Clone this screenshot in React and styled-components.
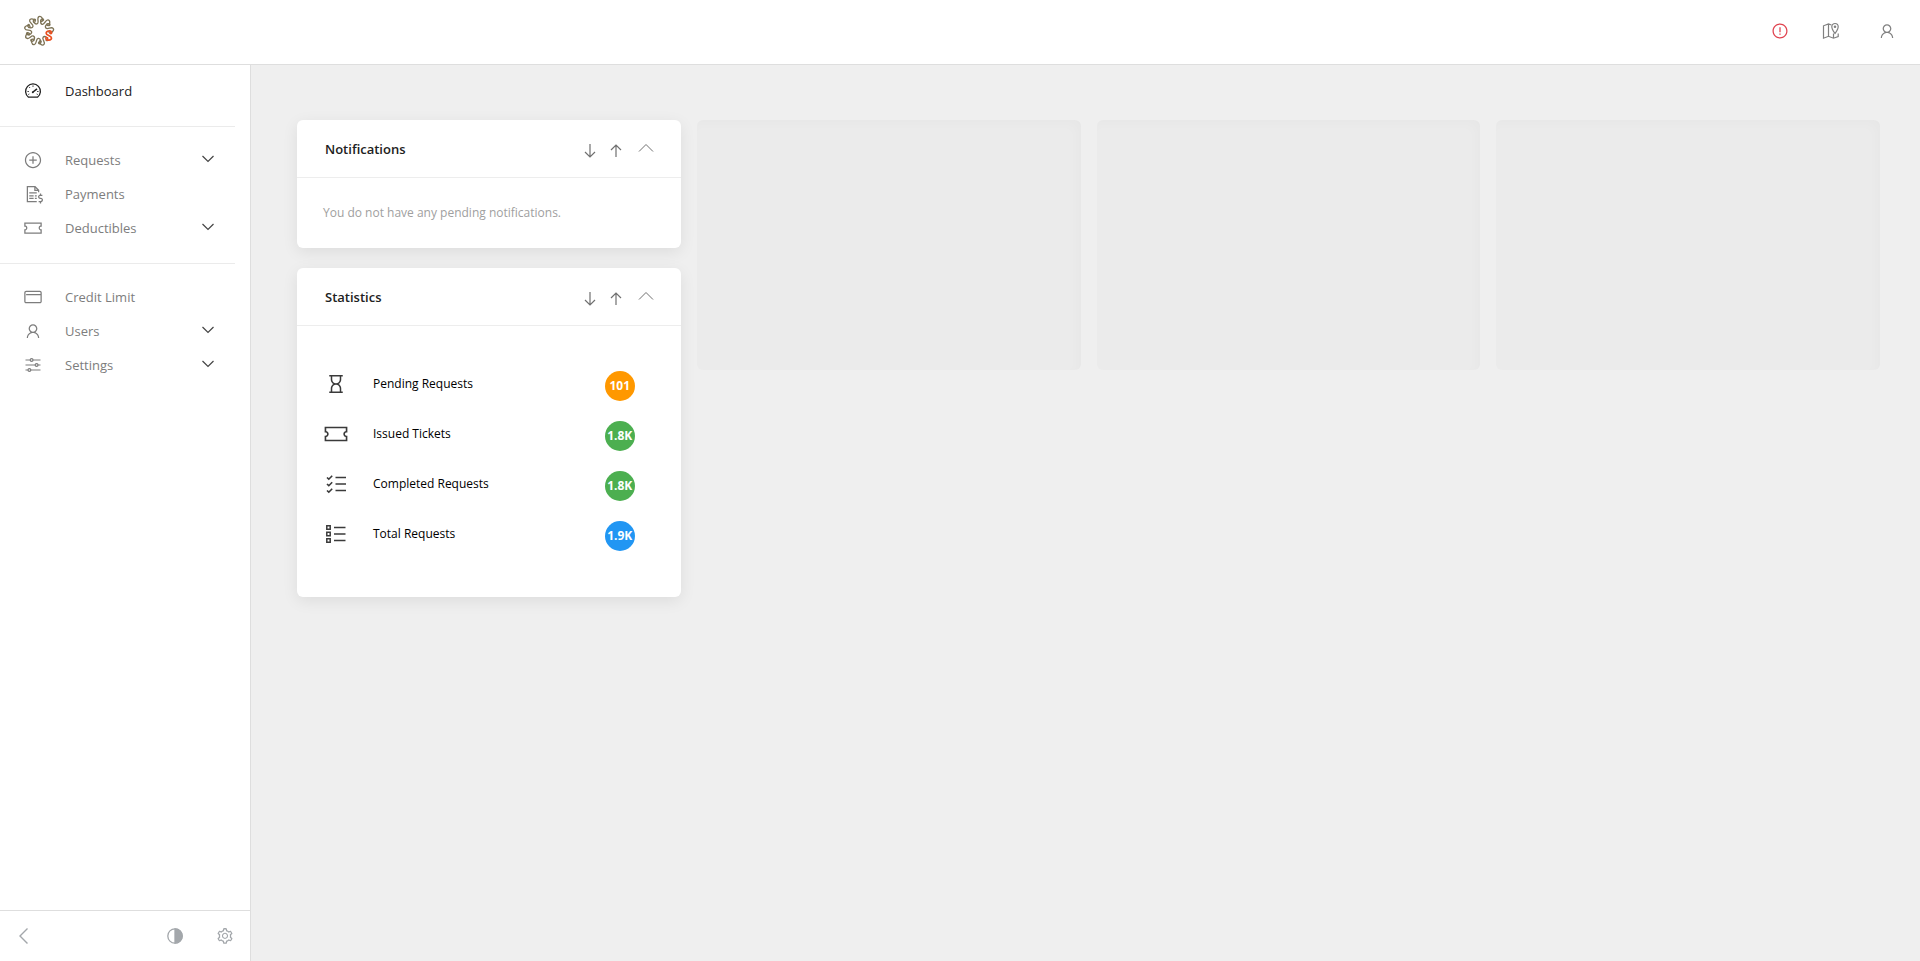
import React from 'react'
import styled, { createGlobalStyle } from 'styled-components'
import {
  LiaCreditCard,
  LiaExclamationCircleSolid,
  LiaFileInvoiceDollarSolid,
  LiaHourglass,
  LiaPlusCircleSolid,
  LiaTicketAltSolid,
  LiaUser,
} from 'react-icons/lia'
import { AiOutlineSetting } from 'react-icons/ai'

const GlobalStyle = createGlobalStyle`
  * {
    box-sizing: border-box;
  }
  body {
    margin: 0;
    background: #efefef;
    color: #212121;
    font-family: 'Open Sans', 'Noto Sans', sans-serif;
    font-size: 12px;
    line-height: 20px;
  }
  button {
    display: flex;
    padding: 0;
    border: 0;
    background: none;
    color: inherit;
    font: inherit;
    cursor: pointer;
  }
  svg {
    display: block;
    flex: none;
  }
`

const Page = styled.div`
  display: grid;
  grid-template-columns: 251px 1fr;
  grid-template-rows: 65px 1fr;
  min-height: 100vh;
`

const Header = styled.header`
  grid-column: 1 / -1;
  display: flex;
  align-items: center;
  justify-content: space-between;
  padding: 0 23px 2px;
  background: #fff;
  border-bottom: 1px solid #dedede;
`

const HeaderActions = styled.div`
  display: flex;
  align-items: center;
  color: #808080;
`

const HeaderButton = styled.button`
  margin-left: ${(props) => props.$gap || 0}px;
  color: ${(props) => props.$color || 'inherit'};
`

const Sidebar = styled.aside`
  display: flex;
  flex-direction: column;
  justify-content: space-between;
  background: #fff;
  border-right: 1px solid #dedede;
`

const Menu = styled.nav`
  padding-top: 9px;
`

const MenuGroup = styled.ul`
  list-style: none;
  margin: 0;
  padding: 0;

  & + & {
    margin: 18px 15px 0 0;
    padding-top: 16px;
    border-top: 1px solid #ebebeb;
  }
`

const MenuLink = styled.a`
  display: grid;
  grid-template-columns: 20px 1fr 14px;
  column-gap: 22px;
  align-items: center;
  height: 34px;
  padding: 0 20px 0 23px;
  color: ${(props) => (props.$active ? '#212121' : '#7d7d7d')};
  font-size: 13px;
  text-decoration: none;

  svg {
    justify-self: center;
  }
`

const SidebarFooter = styled.div`
  display: flex;
  align-items: center;
  height: 51px;
  padding: 0 16px 0 18px;
  border-top: 1px solid #dedede;
  color: #a3a7ab;
`

const FooterTools = styled.div`
  display: flex;
  gap: 32px;
  margin-left: auto;
`

const Main = styled.main`
  display: grid;
  grid-template-columns: repeat(4, 1fr);
  column-gap: 16px;
  align-items: start;
  padding: 55px 40px 55px 46px;
`

const Column = styled.div`
  display: grid;
  row-gap: 20px;
`

const Placeholder = styled.div`
  height: 250px;
  border-radius: 6px;
  background: #ebebeb;
  box-shadow: inset -5px 5px 12px -2px rgba(0, 0, 0, 0.02);
`

const Card = styled.section`
  border-radius: 6px;
  background: #fff;
  box-shadow: 0 4px 16px rgba(0, 0, 0, 0.08);
`

const CardHeader = styled.header`
  display: flex;
  align-items: center;
  justify-content: space-between;
  height: 58px;
  padding: 0 27px 0 28px;
  border-bottom: 1px solid #ededed;
`

const CardTitle = styled.h2`
  margin: 0;
  font-size: 13px;
  font-weight: 600;
`

const CardTools = styled.div`
  display: flex;
  align-items: flex-start;
  padding-top: 3px;
  color: #707070;

  button + button {
    margin-left: 10px;
  }
  button:last-child {
    margin-left: 14px;
  }
`

const Message = styled.p`
  margin: 0;
  padding: 25px 26px;
  color: #a0a0a0;
`

const StatList = styled.ul`
  list-style: none;
  margin: 0;
  padding: 33px 46px 38px 26px;
`

const Stat = styled.li`
  display: grid;
  grid-template-columns: 26px 1fr 30px;
  column-gap: 24px;
  align-items: center;
  height: 50px;
  color: #000;

  svg {
    justify-self: center;
    color: #3a3a3a;
  }
`

const Badge = styled.span`
  display: flex;
  align-items: center;
  justify-content: center;
  height: 30px;
  margin-top: 3px;
  border-radius: 50%;
  background: ${(props) => props.$color};
  color: #fff;
  font-size: 12px;
  font-weight: 700;
`

const Line = ({ width = 18, height = width, box, stroke = 1, children, ...rest }) => (
  <svg
    width={width}
    height={height}
    viewBox={box || `0 0 ${width} ${height}`}
    fill='none'
    stroke='currentColor'
    strokeWidth={stroke}
    {...rest}
  >
    {children}
  </svg>
)

const ChevronDown = () => (
  <Line width={14} height={12} stroke={1.2} color='#444'>
    <path d='M1.500 2 7 7.500l5.500-5.500' />
  </Line>
)

const ChevronUp = () => (
  <Line width={16} height={12}>
    <path d='M1 9.500l7-7 7 7' />
  </Line>
)

const ChevronLeft = () => (
  <Line width={12} height={18} stroke={1.4}>
    <path d='M9.500 1.500 2 9l7.500 7.500' />
  </Line>
)

const ArrowDown = () => (
  <Line width={16} stroke={1.2}>
    <path d='M8 2v13M3 10l5 5 5-5' />
  </Line>
)

const ArrowUp = () => (
  <Line width={16} stroke={1.2}>
    <path d='M8 15V3M3 8l5-5 5 5' />
  </Line>
)

const Contrast = () => (
  <Line stroke={1.3}>
    <circle cx='9' cy='9' r='7.2' />
    <path d='M9 1.8a7.2 7.2 0 0 1 0 14.4z' fill='currentColor' />
  </Line>
)

const Gauge = () => (
  <Line stroke={1.3}>
    <path d='M4.500 15.200a7.400 7.400 0 1 1 9 0z' strokeLinejoin='round' />
    <path d='M9 10l4-3.200' stroke='currentColor' strokeWidth='1.600' />
    <circle cx='8.800' cy='10.200' r='1' fill='currentColor' stroke='none' />
    <path
      d='M9 3.500v1.300M5.300 5.200l.8.8M3.500 9.500h1.300M14.500 9.500h-1.300M4.300 12.500l1-.5M13.700 12.500l-1-.5'
      strokeWidth='1'
    />
  </Line>
)

const MapPin = () => (
  <Line stroke={1.2}>
    <path d='M9.500 3 6.500 2 1.500 3.800v12.400l5-1.900 5 1.900 4.700-1.700v-3M6.500 2v12.300M11.500 11.500v4.700' />
    <path d='M13 11.500c-1.800-2.600-3.200-4.500-3.200-6.800a3.200 3.200 0 0 1 6.400 0c0 2.300-1.400 4.200-3.200 6.800z' />
    <circle cx='13' cy='4.800' r='0.7' />
  </Line>
)

const Sliders = () => (
  <Line stroke={1.2}>
    <path d='M1.500 4h4.700M9 4h7.500M1.500 9h9.700M14 9h2.500M1.500 14H4M7 14h9.500' />
    <circle cx='7.600' cy='4' r='1.400' />
    <circle cx='12.600' cy='9' r='1.400' />
    <circle cx='5.400' cy='14' r='1.400' />
  </Line>
)

const CheckList = () => (
  <Line width={24} stroke={1.6}>
    <path d='M3 5.500l1.800 1.700 3.400-3.400M3 12l1.800 1.700 3.400-3.400M3 18.500l1.800 1.700 3.400-3.400' />
    <path d='M11.500 5.500H22M11.500 12H22M11.500 18.500H22' />
  </Line>
)

const ListBoxes = () => (
  <Line width={24} stroke={1.5}>
    <path d='M2.800 3.800h3.400v3.400H2.800zM2.800 10.300h3.400v3.400H2.800zM2.800 16.800h3.400v3.400H2.800z' />
    <path d='M10 5.500h11.500M10 12h11.500M10 18.500h11.500' />
  </Line>
)

const petals = [8, 7, 6, 5, 4, 3, 2, 1, 0]

const Logo = () => (
  <Line width={32} box='-16 -16 32 32' strokeLinecap='round'>
    {petals.map((n) => (
      <path
        key={n}
        d='M1.300-2.300C2 -1.600 3 -2.200 2.800-3.200 2.300-5.200-2.600-5.100-2.600-2.400-2.600.2 2.700-.4 2.700 2.500 2.700 5.200-2.500 5.200-2.900 3.100-3 2-2 1.600-1.300 2.300'
        transform={`rotate(${25 + n * 40}) translate(10.800 0) rotate(-25)`}
        stroke={n === 0 ? '#ea4f20' : '#7d7356'}
        strokeWidth={n === 0 ? 1.7 : 1.3}
      />
    ))}
  </Line>
)

const menu = [
  [{ label: 'Dashboard', icon: <Gauge />, active: true }],
  [
    { label: 'Requests', icon: <LiaPlusCircleSolid size={20} />, nested: true },
    { label: 'Payments', icon: <LiaFileInvoiceDollarSolid size={20} /> },
    { label: 'Deductibles', icon: <LiaTicketAltSolid size={20} />, nested: true },
  ],
  [
    { label: 'Credit Limit', icon: <LiaCreditCard size={20} /> },
    { label: 'Users', icon: <LiaUser size={20} />, nested: true },
    { label: 'Settings', icon: <Sliders />, nested: true },
  ],
]

const stats = [
  { label: 'Pending Requests', value: '101', color: '#ff9800', icon: <LiaHourglass size={24} /> },
  { label: 'Issued Tickets', value: '1.8K', color: '#4caf50', icon: <LiaTicketAltSolid size={26} /> },
  { label: 'Completed Requests', value: '1.8K', color: '#4caf50', icon: <CheckList /> },
  { label: 'Total Requests', value: '1.9K', color: '#2196f3', icon: <ListBoxes /> },
]

const Widget = ({ title, children }) => (
  <Card>
    <CardHeader>
      <CardTitle>{title}</CardTitle>
      <CardTools>
        <button type='button' aria-label={`Move ${title} down`}>
          <ArrowDown />
        </button>
        <button type='button' aria-label={`Move ${title} up`}>
          <ArrowUp />
        </button>
        <button type='button' aria-label={`Collapse ${title}`}>
          <ChevronUp />
        </button>
      </CardTools>
    </CardHeader>
    {children}
  </Card>
)

const App = () => {
  return (
    <Page>
      <GlobalStyle />
      <Header>
        <a href='#home' aria-label='Home'>
          <Logo />
        </a>
        <HeaderActions>
          <HeaderButton type='button' aria-label='Alerts' $color='#e0434f'>
            <LiaExclamationCircleSolid size={20} />
          </HeaderButton>
          <HeaderButton type='button' aria-label='Map' $gap={32}>
            <MapPin />
          </HeaderButton>
          <HeaderButton type='button' aria-label='Account' $gap={37}>
            <LiaUser size={20} />
          </HeaderButton>
        </HeaderActions>
      </Header>
      <Sidebar>
        <Menu>
          {menu.map((group) => (
            <MenuGroup key={group[0].label}>
              {group.map((item) => (
                <li key={item.label}>
                  <MenuLink href='#menu' $active={item.active}>
                    {item.icon}
                    <span>{item.label}</span>
                    {item.nested && <ChevronDown />}
                  </MenuLink>
                </li>
              ))}
            </MenuGroup>
          ))}
        </Menu>
        <SidebarFooter>
          <button type='button' aria-label='Collapse menu'>
            <ChevronLeft />
          </button>
          <FooterTools>
            <button type='button' aria-label='Contrast'>
              <Contrast />
            </button>
            <button type='button' aria-label='Preferences'>
              <AiOutlineSetting size={18} />
            </button>
          </FooterTools>
        </SidebarFooter>
      </Sidebar>
      <Main>
        <Column>
          <Widget title='Notifications'>
            <Message>You do not have any pending notifications.</Message>
          </Widget>
          <Widget title='Statistics'>
            <StatList>
              {stats.map((stat) => (
                <Stat key={stat.label}>
                  {stat.icon}
                  <span>{stat.label}</span>
                  <Badge $color={stat.color}>{stat.value}</Badge>
                </Stat>
              ))}
            </StatList>
          </Widget>
        </Column>
        <Placeholder />
        <Placeholder />
        <Placeholder />
      </Main>
    </Page>
  )
}

export default App
